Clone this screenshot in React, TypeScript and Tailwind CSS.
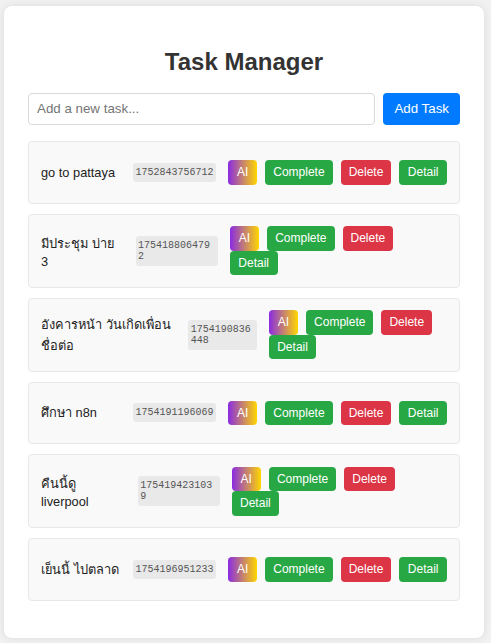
import React, { useState } from 'react';

type Task = { id: number; text: string };

const initialTasks: Task[] = [
  { id: 1752843756712, text: 'go to pattaya' },
  { id: 1754188064792, text: 'มีประชุม บ่าย 3' },
  { id: 1754190836448, text: 'อังคารหน้า วันเกิดเพื่อน ชื่อต่อ' },
  { id: 1754191196069, text: 'ศึกษา n8n' },
  { id: 1754194231039, text: 'คืนนี้ดู liverpool' },
  { id: 1754196951233, text: 'เย็นนี้ ไปตลาด' },
];

const btn = 'rounded text-white text-[12px] leading-[14.5px] py-[5px]';

const App: React.FC = () => {
  const [task, setTask] = useState('');
  const [tasks, setTasks] = useState<Task[]>(initialTasks);

  const addTask = () => {
    if (task.trim() !== '') {
      setTasks((prev) => [...prev, { id: Date.now(), text: task.trim() }]);
      setTask('');
    }
  };

  return (
    <div className="min-h-screen bg-[#f2f2f2] pt-[6px] pl-[4px] pb-[6px] font-['Liberation_Sans',Arial,sans-serif]">
      <div className="w-[480px] bg-white rounded-lg shadow-[0_0_10px_rgba(0,0,0,0.1)] px-6 pt-[42px] pb-[37px]">
        <h1 className="text-center text-[24px] leading-[1.15] font-bold text-[#333] mb-[17px]">
          Task Manager
        </h1>
        <div className="flex gap-2 mb-4">
          <input
            value={task}
            onChange={(e) => setTask(e.target.value)}
            placeholder="Add a new task..."
            className="flex-1 h-[32.5px] px-2 border border-[#d9d9d9] rounded text-[13.33px] outline-none placeholder:text-[#757575]"
          />
          <button
            onClick={addTask}
            className="h-[32.5px] px-[11px] bg-[#007bff] text-white rounded text-[13.33px]"
          >
            Add Task
          </button>
        </div>
        <ul className="flex flex-col gap-[10px]">
          {tasks.map((t) => (
            <li
              key={t.id}
              className="flex items-center gap-3 min-h-[62.5px] px-3 py-[11.5px] bg-[#f9f9f9] border border-[#e8e8e8] rounded"
            >
              <span className="grow text-[12.8px] leading-[normal] text-[#222]">{t.text}</span>
              <span className="bg-[#e9e9e9] text-[#555] font-['Liberation_Mono',monospace] text-[10px] leading-[normal] px-[2.5px] py-1 rounded-[3px] break-all">
                {t.id}
              </span>
              <div className="flex flex-wrap gap-x-2">
                <button className={`${btn} px-[9px] bg-linear-to-r/srgb from-[#8a2be2] to-[#ffd700]`}>AI</button>
                <button className={`${btn} px-2 bg-[#28a745]`}>Complete</button>
                <button
                  className={`${btn} px-2 bg-[#dc3545]`}
                  onClick={() => setTasks((prev) => prev.filter((x) => x.id !== t.id))}
                >
                  Delete
                </button>
                <button className={`${btn} px-[8.5px] bg-[#28a745]`}>Detail</button>
              </div>
            </li>
          ))}
        </ul>
      </div>
    </div>
  );
};

export default App;
